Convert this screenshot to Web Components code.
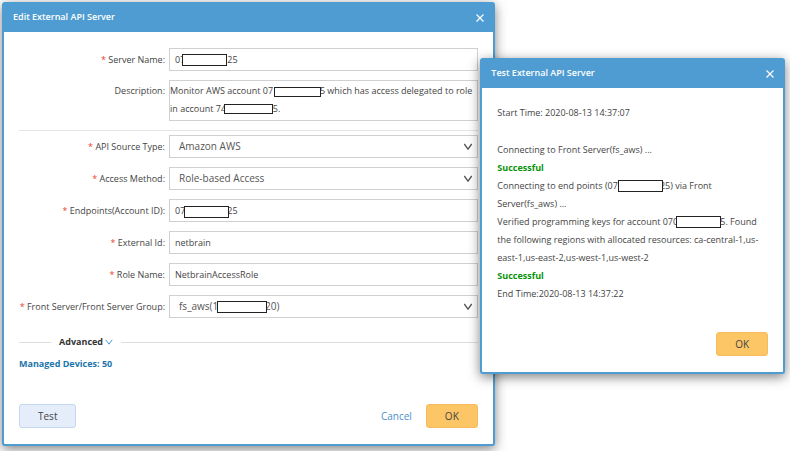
<!DOCTYPE html>
<html lang="en">
<head>
<meta charset="utf-8">
<title>Edit External API Server</title>
<style>
  body { margin: 0; background: #fff; font-family: "Open Sans", "Noto Sans", sans-serif; color: #444; }
</style>
</head>
<body>
<api-desktop></api-desktop>
<script>
/* "~n~" in a text stands for n blank characters under a mask bar */
const blanks = text => text.replace(/~(\d+)~/g, (_, n) => '\u00a0'.repeat(+n));

function define(name, html, setup) {
  const tpl = document.createElement('template');
  tpl.innerHTML = html;
  customElements.define(name, class extends HTMLElement {
    constructor() {
      super();
      this.attachShadow({ mode: 'open' }).append(tpl.content.cloneNode(true));
    }
    connectedCallback() {
      if (setup && !this.ready) { this.ready = true; setup(this, this.shadowRoot); }
    }
  });
}

/* Black outlined bar that hides part of a number */
define('mask-bar', `
<style>
  :host { display: block; position: absolute; box-sizing: border-box; width: 45px; height: 12px;
    border: 1px solid #222; background: #fff; }
</style>`);

/* Push button: kind = plain | link, amber by default */
define('push-button', `
<style>
  :host { display: block; }
  button { font: 10px/14px "Open Sans", sans-serif; color: #444; box-sizing: border-box;
    padding: 4px 18px; border: 1px solid #f7bd5c; border-radius: 3px; background: #fcc566;
    display: block; min-width: 52px; height: 24px; cursor: pointer; }
  :host([kind=plain]) button { border-color: #c3d8ee; background: #e5edfb; min-width: 57px; }
  :host([kind=link]) button { border-color: transparent; background: none; color: #4b8fc8; padding: 4px 0; min-width: 0; }
</style>
<button type="button"><slot></slot></button>`);

define('modal-window', `
<style>
  :host { display: flex; flex-direction: column; box-sizing: border-box; background: #fff;
    border: 2px solid #4e9cd1; border-top: 0; border-radius: 3px;
    box-shadow: 0 3px 12px rgba(0,0,0,.5); }
  header { display: flex; align-items: center; justify-content: space-between; height: 30px;
    padding: 0 8px 0 9px; background: #4e9cd1; color: #fff; }
  h1 { margin: 0; font-size: 9px; line-height: 14px; font-weight: 600; }
  header button { padding: 0; border: 0; background: none; color: #fff; width: 10px; height: 10px; display: block; cursor: pointer; }
  svg { display: block; }
  .content { padding: 16px 15px 0; }
  footer { display: flex; align-items: center; padding: 0 15px 16px; margin-top: auto; }
</style>
<header><h1></h1><button type="button" aria-label="Close"><svg width="10" height="10" viewBox="0 0 10 10" fill="none" stroke="currentColor" stroke-width="1.2"><path d="M1.5 2.5l7 7M8.5 2.5l-7 7"/></svg></button></header>
<div class="content"><slot></slot></div>
<footer><slot name="footer"></slot></footer>`,
(host, root) => { root.querySelector('h1').textContent = host.getAttribute('heading'); });

/* Labelled field: type = text | select | area */
define('form-field', `
<style>
  :host { display: grid; grid-template-columns: 146px 1fr; column-gap: 4px; align-items: center; }
  label { font-size: 9px; line-height: 18px; text-align: right; white-space: nowrap; }
  :host([required]) label::before { content: "* "; color: #e8432e; }
  :host([type=area]) { align-items: start; }
  :host([type=area]) label { padding-top: 2px; }
  .box { position: relative; display: flex; min-width: 0; }
  input, select, textarea { flex: 1; min-width: 0; box-sizing: border-box; margin: 0; height: 23px;
    border: 1px solid #d0d0d0; border-radius: 0; background: #fff; color: #444;
    font: 9px/18px "Open Sans", sans-serif; padding: 0 5px; outline: 0; }
  select { appearance: none; font-size: 10px; line-height: 16px; padding: 0 24px 2px 9px; color: #555; }
  textarea { height: 41px; padding: 1px 0; resize: none; overflow: hidden; display: block; }
  .box svg { position: absolute; right: 5px; top: 7px; }
</style>
<label for="f"></label><div class="box"><slot></slot></div>`,
(host, root) => {
  const type = host.getAttribute('type') || 'text';
  const value = blanks(host.getAttribute('value'));
  root.querySelector('label').textContent = host.getAttribute('label');
  const el = document.createElement(type === 'select' ? 'select' : type === 'area' ? 'textarea' : 'input');
  el.id = 'f';
  if (type === 'select') el.append(new Option(value)); else el.value = value;
  el.spellcheck = false;
  const box = root.querySelector('.box');
  box.prepend(el);
  if (type === 'select') box.insertAdjacentHTML('beforeend',
    '<svg width="10" height="10" viewBox="0 0 10 10" fill="none" stroke="#555" stroke-width="1.3" pointer-events="none"><path d="M1.3 2L5 7.2 8.7 2"/></svg>');
});

define('edit-form', `
<style>
  :host { display: flex; flex-direction: column; gap: 9px; }
  hr { width: 100%; margin: 0 0 -5px; border: 0; border-top: 1px solid #e4e4e4; }
  .adv { display: flex; align-items: center; margin-top: 6px; gap: 8px; height: 18px; }
  .adv::before, .adv::after { content: ""; border-top: 1px solid #dedede; width: 32px; }
  .adv::after { flex: 1; }
  .adv button { display: flex; align-items: center; gap: 2px; padding: 0; border: 0; background: none;
    font: 700 9px/18px "Open Sans", sans-serif; color: #333; cursor: pointer; }
  p { margin: -5px 0 0; font-size: 9px; line-height: 18px; font-weight: 700; color: #1c75ab; }
</style>
<form-field required label="Server Name:" value="07~18~25"><mask-bar style="left:13px;top:6px"></mask-bar></form-field>
<form-field type="area" label="Description:" value="Monitor AWS account 07~20~5 which has access delegated to role in account 74~20~5."><mask-bar style="left:105px;top:7px;width:47px;height:10px"></mask-bar><mask-bar style="left:55px;top:24px;width:49px;height:10px"></mask-bar></form-field>
<hr>
<form-field required type="select" label="API Source Type:" value="Amazon AWS"></form-field>
<form-field required type="select" label="Access Method:" value="Role-based Access"></form-field>
<form-field required label="Endpoints(Account ID):" value="07~18~25"><mask-bar style="left:15px;top:7px"></mask-bar></form-field>
<form-field required label="External Id:" value="netbrain"></form-field>
<form-field required label="Role Name:" value="NetbrainAccessRole"></form-field>
<form-field required type="select" label="Front Server/Front Server Group:" value="fs_aws(1~18~20)"><mask-bar style="left:48px;top:6px;width:50px"></mask-bar></form-field>
<div class="adv"><button type="button">Advanced<svg width="8" height="8" viewBox="0 0 8 8" fill="none" stroke="#4e9cd1"><path d="M.8 1.8L4 6.2 7.2 1.8"/></svg></button></div>
<p>Managed Devices: 50</p>`);

define('test-log', blanks(`
<style>
  :host { display: block; font-size: 9px; line-height: 18px; }
  p { margin: 0; position: relative; }
  .start { margin-bottom: 19px; }
  strong { color: #0a930a; font-weight: 700; }
  mask-bar { top: 3px; }
</style>
<p class="start">Start Time: 2020-08-13 14:37:07</p>
<p>Connecting to Front Server(fs_aws) ...</p>
<p><strong>Successful</strong></p>
<p>Connecting to end points (07~18~25) via Front Server(fs_aws) ...<mask-bar style="left:121px"></mask-bar></p>
<p>Verified programming keys for account 070~18~5. Found the following regions with allocated resources: ca-central-1,us-east-1,us-east-2,us-west-1,us-west-2<mask-bar style="left:179px"></mask-bar></p>
<p><strong>Successful</strong></p>
<p>End Time:2020-08-13 14:37:22</p>`));

define('api-desktop', `
<style>
  :host { display: block; position: relative; padding: 2px 2px 5px; overflow: hidden; }
  .edit { width: 62.7%; min-height: 444px; }
  .test { position: absolute; left: 60.8%; top: 58px; width: 38.6%; min-height: 316px; }
  .start { margin-right: auto; }
  .cancel { margin-right: 13px; }
  .ok { margin-left: auto; }
</style>
<modal-window class="edit" heading="Edit External API Server">
  <edit-form></edit-form>
  <push-button class="start" slot="footer" kind="plain">Test</push-button>
  <push-button class="cancel" slot="footer" kind="link">Cancel</push-button>
  <push-button slot="footer">OK</push-button>
</modal-window>
<modal-window class="test" heading="Test External API Server">
  <test-log></test-log>
  <push-button class="ok" slot="footer">OK</push-button>
</modal-window>`);
</script>
</body>
</html>
